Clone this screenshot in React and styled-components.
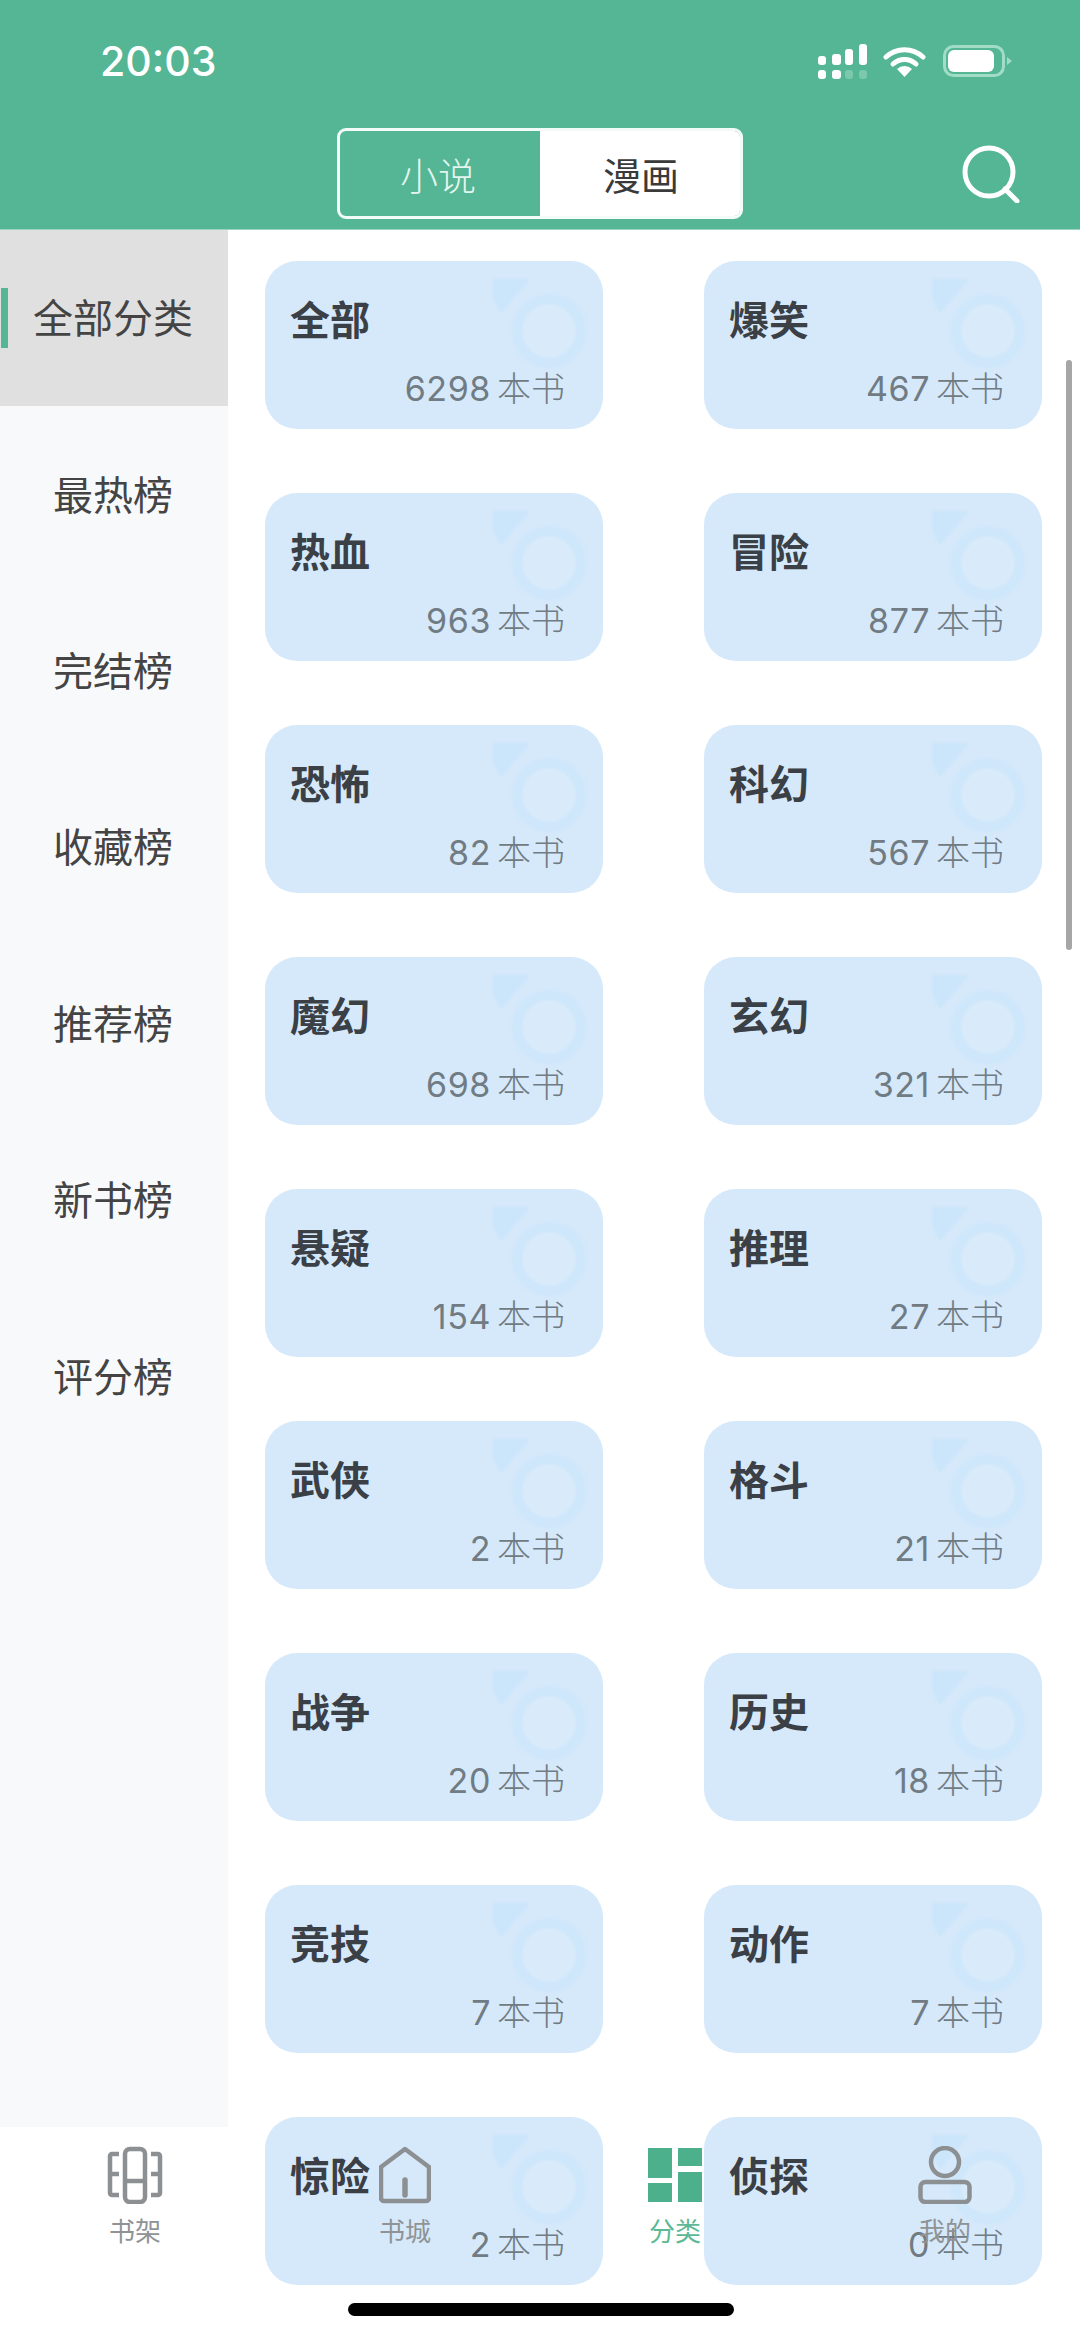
import React from "react"
import styled, { createGlobalStyle } from "styled-components"

const GlobalStyle = createGlobalStyle`
  html, body {
    margin: 0;
    padding: 0;
    background: #fff;
  }
  * {
    box-sizing: border-box;
  }
`

const CJK = `"Inter", "Noto Sans CJK SC", sans-serif`

const Page = styled.div`
  position: relative;
  width: 1080px;
  height: 2336px;
  overflow: hidden;
  background: #fff;
  font-family: ${CJK};
`

const Header = styled.header`
  height: 230px;
  background: #54b694;
  border-bottom: 1px solid #9ad5bf;
`

const StatusBar = styled.div`
  height: 128px;
  padding: 0 68px 6px 100px;
  display: flex;
  align-items: center;
  justify-content: space-between;
`

const Time = styled.div`
  color: #fff;
  font-size: 41px;
  font-weight: 500;
  line-height: 48px;
`

const StatusIcons = styled.div`
  display: flex;
  align-items: center;
  gap: 15px;
`

const BatteryGlyph = styled.svg`
  margin-left: 2px;
`

const NavRow = styled.div`
  display: grid;
  grid-template-columns: 1fr 406px 1fr;
  align-items: center;
`

const Switcher = styled.div`
  grid-column: 2;
  height: 91px;
  display: flex;
  border: 3px solid #f2fbf7;
  border-radius: 9px;
  overflow: hidden;
`

const SwitchTab = styled.div`
  flex: ${props => (props.$active ? "0 0 200px" : 1)};
  padding: ${props => (props.$active ? "0 4px 0 0" : "0 0 0 2px")};
  display: flex;
  align-items: center;
  justify-content: center;
  font-size: 38px;
  font-weight: ${props => (props.$active ? 300 : 400)};
  background: ${props => (props.$active ? "transparent" : "#fff")};
  color: ${props => (props.$active ? "#e3f5ee" : "#3a3a3a")};
`

const SearchSlot = styled.div`
  display: flex;
  justify-content: flex-end;
  padding: 0 60px 0 0;
`

const Body = styled.div`
  display: flex;
  height: 1897px;
`

const Sidebar = styled.nav`
  flex: 0 0 228px;
  background: #f8f9fb;
`

const SideItem = styled.div`
  position: relative;
  height: 176.4px;
  padding: 0 2px 4px 0;
  display: flex;
  align-items: center;
  justify-content: center;
  font-size: 40px;
  font-weight: 400;
  color: #444;
  background: ${props => (props.$active ? "#e0e0e0" : "transparent")};
`

const SideMark = styled.span`
  position: absolute;
  left: 1px;
  top: 58px;
  width: 7px;
  height: 60px;
  background: #54b694;
`

const CardGrid = styled.div`
  display: grid;
  grid-template-columns: 338px 338px;
  grid-auto-rows: 168px;
  column-gap: 101px;
  row-gap: 64px;
  padding: 31px 0 0 37px;
`

const Card = styled.div`
  position: relative;
  border-radius: 32px;
  background: #d6e9fa;
  padding: 38px 38px 0 25px;
  display: flex;
  flex-direction: column;
`

const Watermark = styled.svg`
  position: absolute;
  left: 228px;
  top: 16px;
  filter: blur(1.2px);
`

const CardTitle = styled.div`
  position: relative;
  font-size: 40px;
  line-height: 44px;
  font-weight: 700;
  color: #3a4046;
`

const CardCount = styled.div`
  position: relative;
  margin-top: 26px;
  display: flex;
  justify-content: flex-end;
  font-size: 34px;
  line-height: 40px;
  letter-spacing: 0.6px;
  color: #707b83;
`

const CountUnit = styled.span`
  margin-left: 6px;
  letter-spacing: 0;
  font-weight: 300;
`

const TabBar = styled.div`
  position: absolute;
  left: 0;
  right: 0;
  top: 2146px;
  display: flex;
`

const TabItem = styled.div`
  flex: 1;
  display: flex;
  flex-direction: column;
  align-items: center;
`

const TabIcon = styled.div`
  height: 58px;
  display: flex;
  align-items: center;
  justify-content: center;
`

const TabLabel = styled.div`
  margin-top: 13px;
  font-size: 26px;
  line-height: 30px;
  font-weight: 400;
  color: ${props => (props.$active ? "#5db896" : "#8f9396")};
`

const ScrollThumb = styled.div`
  position: absolute;
  left: 1066px;
  top: 360px;
  width: 6px;
  height: 590px;
  border-radius: 3px;
  background: #a6a6a6;
`

const HomeBar = styled.div`
  position: absolute;
  left: 348px;
  top: 2303px;
  width: 386px;
  height: 13px;
  border-radius: 7px;
  background: #000;
`

const SignalIcon = () => (
  <svg width="50" height="35" viewBox="0 0 50 35">
    <g fill="#fff">
      <rect x="0" y="12" width="8" height="9" rx="3" />
      <rect x="14" y="10" width="9" height="11" rx="3" />
      <rect x="27" y="5" width="8" height="16" rx="3" />
      <rect x="41" y="0" width="8" height="21" rx="3" />
      <rect x="0" y="26" width="8" height="9" rx="3" />
      <rect x="14" y="26" width="9" height="9" rx="3" />
    </g>
    <g fill="#7cc8ad">
      <rect x="27" y="26" width="8" height="9" rx="3" />
      <rect x="41" y="26" width="8" height="9" rx="3" />
    </g>
  </svg>
)

const WifiIcon = () => (
  <svg width="43" height="31" viewBox="0 0 43 31">
    <path d="M3 11 A27 27 0 0 1 40 11" fill="none" stroke="#fff" strokeWidth="5" strokeLinecap="round" />
    <path d="M10 18 A17 17 0 0 1 33 18" fill="none" stroke="#fff" strokeWidth="5" strokeLinecap="round" />
    <path d="M21.5 31 L14 23 A11 11 0 0 1 29 23 Z" fill="#fff" />
  </svg>
)

const BatteryIcon = () => (
  <BatteryGlyph width="69" height="32" viewBox="0 0 69 32">
    <rect x="1.5" y="1.5" width="59" height="29" rx="9" fill="none" stroke="#a0dcc6" strokeWidth="3" />
    <rect x="5" y="5" width="46" height="22" rx="6" fill="#fff" />
    <path d="M64 12 L69 16 L64 20 Z" fill="#a0dcc6" />
  </BatteryGlyph>
)

const SearchIcon = () => (
  <svg width="58" height="58" viewBox="0 0 58 58">
    <circle cx="27" cy="27" r="24" fill="none" stroke="#fff" strokeWidth="5" />
    <path d="M43 44 L55 56" fill="none" stroke="#fff" strokeWidth="5" strokeLinecap="round" />
  </svg>
)

const ShelfIcon = () => (
  <svg width="56" height="58" viewBox="0 0 56 58" fill="none" stroke="#8c9092" strokeWidth="4.5">
    <rect x="18" y="3" width="20" height="53" rx="5" />
    <path d="M18 35 H38" />
    <path d="M12 8 H5 a2 2 0 0 0-2 2 V47 a2 2 0 0 0 2 2 H12 M3 28 H12" />
    <path d="M44 8 H51 a2 2 0 0 1 2 2 V47 a2 2 0 0 1-2 2 H44 M53 28 H44" />
  </svg>
)

const HomeIcon = () => (
  <svg width="52" height="58" viewBox="0 0 52 58" fill="none" stroke="#8c9092" strokeWidth="4.5">
    <path d="M26 3 L50 21 V52 a3 3 0 0 1-3 3 H5 a3 3 0 0 1-3-3 V21 Z" strokeLinejoin="round" />
    <path d="M26 34 V49" strokeWidth="5.5" strokeLinecap="round" />
  </svg>
)

const CategoryIcon = () => (
  <svg width="54" height="56" viewBox="0 0 54 56" fill="#4db08d">
    <rect x="0" y="1" width="24" height="30" />
    <rect x="0" y="36" width="24" height="19" />
    <rect x="30" y="1" width="24" height="18" />
    <rect x="30" y="25" width="24" height="30" />
  </svg>
)

const UserIcon = () => (
  <svg width="54" height="58" viewBox="0 0 54 58" fill="none" stroke="#8c9092" strokeWidth="4.5">
    <circle cx="27" cy="16" r="14" />
    <rect x="2.5" y="36" width="49" height="20" rx="5" />
  </svg>
)

const categories = [
  ["全部", 6298], ["爆笑", 467],
  ["热血", 963], ["冒险", 877],
  ["恐怖", 82], ["科幻", 567],
  ["魔幻", 698], ["玄幻", 321],
  ["悬疑", 154], ["推理", 27],
  ["武侠", 2], ["格斗", 21],
  ["战争", 20], ["历史", 18],
  ["竞技", 7], ["动作", 7],
  ["惊险", 2], ["侦探", 0]
]

const rankings = ["全部分类", "最热榜", "完结榜", "收藏榜", "推荐榜", "新书榜", "评分榜"]

const tabs = [
  { label: "书架", icon: <ShelfIcon /> },
  { label: "书城", icon: <HomeIcon /> },
  { label: "分类", icon: <CategoryIcon />, active: true },
  { label: "我的", icon: <UserIcon /> }
]

const App = () => {
  return (
    <Page>
      <GlobalStyle />
      <Header>
        <StatusBar>
          <Time>20:03</Time>
          <StatusIcons>
            <SignalIcon />
            <WifiIcon />
            <BatteryIcon />
          </StatusIcons>
        </StatusBar>
        <NavRow>
          <Switcher>
            <SwitchTab $active>小说</SwitchTab>
            <SwitchTab>漫画</SwitchTab>
          </Switcher>
          <SearchSlot>
            <SearchIcon />
          </SearchSlot>
        </NavRow>
      </Header>
      <Body>
        <Sidebar>
          {rankings.map((name, i) => (
            <SideItem key={name} $active={i === 0}>
              {i === 0 && <SideMark />}
              {name}
            </SideItem>
          ))}
        </Sidebar>
        <CardGrid>
          {categories.map(([name, count]) => (
            <Card key={name}>
              <Watermark width="100" height="100" viewBox="0 0 100 100">
                <polygon points="0,2 35,2 35,5 8,36 0,22" fill="#cbe5fb" />
                <circle cx="56" cy="54" r="32" fill="#d9ebfa" stroke="#cfe7fb" strokeWidth="11" />
              </Watermark>
              <CardTitle>{name}</CardTitle>
              <CardCount>
                {count}
                <CountUnit>本书</CountUnit>
              </CardCount>
            </Card>
          ))}
        </CardGrid>
      </Body>
      <TabBar>
        {tabs.map(tab => (
          <TabItem key={tab.label}>
            <TabIcon>{tab.icon}</TabIcon>
            <TabLabel $active={tab.active}>{tab.label}</TabLabel>
          </TabItem>
        ))}
      </TabBar>
      <ScrollThumb />
      <HomeBar />
    </Page>
  )
}

export default App
